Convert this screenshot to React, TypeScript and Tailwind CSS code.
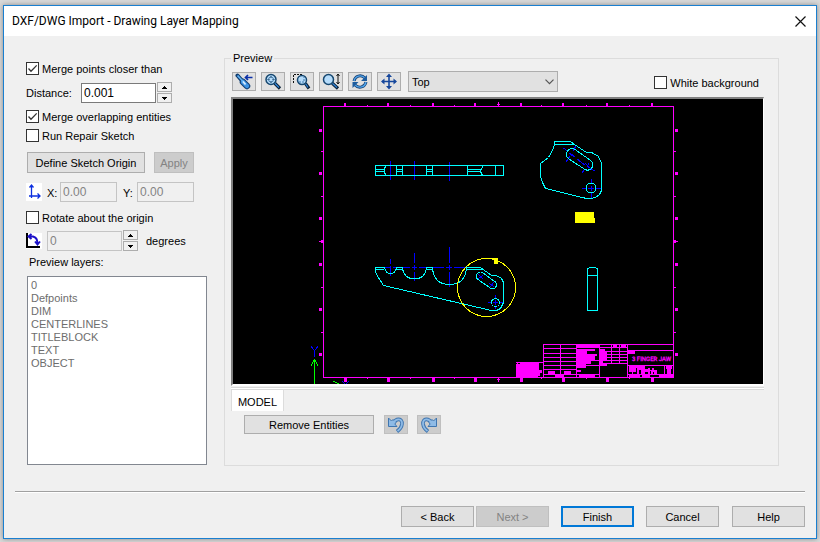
import React, { useState } from "react";

const BTN = "border border-[#adadad] bg-[#e1e1e1] text-center text-black";
const BTN_OFF = "border border-[#bfbfbf] bg-[#cccccc] text-center text-[#838383]";

function Check({ id, label, on = false }: { id: string; label: string; on?: boolean }) {
  const [checked, setChecked] = useState(on);
  return (
    <label htmlFor={id} className="flex h-[13px] items-center gap-[3px] whitespace-nowrap">
      <span className="grid shrink-0">
        <input
          id={id}
          type="checkbox"
          checked={checked}
          onChange={(e) => setChecked(e.target.checked)}
          className="col-start-1 row-start-1 size-[13px] appearance-none border border-[#333333] bg-white"
        />
        {checked && (
          <svg viewBox="0 0 13 13" className="pointer-events-none col-start-1 row-start-1 size-[13px]">
            <path d="M2.5 6.5 5 9.2 10.7 3.4" fill="none" stroke="#333" strokeWidth="1.3" />
          </svg>
        )}
      </span>
      <span className="pt-[2px]">{label}</span>
    </label>
  );
}

function Spinner({ name }: { name: string }) {
  return (
    <div className="flex flex-col gap-px">
      <button aria-label={`Increase ${name}`} className="grid h-[10px] w-[15px] place-items-center border border-[#adadad] bg-[#f0f0f0]">
        <svg viewBox="0 0 5 3" className="h-[3px] w-[5px]" shapeRendering="crispEdges">
          <path d="M2 0h1v1h1v1h1v1H0V2h1V1h1z" />
        </svg>
      </button>
      <button aria-label={`Decrease ${name}`} className="grid h-[10px] w-[15px] place-items-center border border-[#adadad] bg-[#f0f0f0]">
        <svg viewBox="0 0 5 3" className="h-[3px] w-[5px]" shapeRendering="crispEdges">
          <path d="M0 0h5v1H4v1H3v1H2V2H1V1H0z" />
        </svg>
      </button>
    </div>
  );
}

function Tool({ label, off = false, children }: { label: string; off?: boolean; children: React.ReactNode }) {
  return (
    <button
      aria-label={label}
      disabled={off}
      className={`grid h-[19px] w-6 shrink-0 place-items-center ${off ? BTN_OFF : BTN}`}
    >
      <svg viewBox="0 0 18 17" className="h-[17px] w-[18px]" fill="none">
        {children}
      </svg>
    </button>
  );
}

function Lens({ cx, cy, r }: { cx: number; cy: number; r: number }) {
  const o = r * 0.75;
  return (
    <>
      <path d={`M${cx + o} ${cy + o} 16 15.5`} stroke="#0c2238" strokeWidth="3.2" />
      <path d={`M${cx + o} ${cy + o} 15 14.5`} stroke="#2f83d8" strokeWidth="1.2" />
      <circle cx={cx} cy={cy} r={r} fill="#b5dcfb" stroke="#16476f" strokeWidth="1.5" />
    </>
  );
}

function Undo() {
  return (
    <>
      <path d="M6.5 7C9 2 15.500 2 15 8c-.3 3-2 5.200-5 7.500" stroke="#4076b0" strokeWidth="3.600" />
      <path d="M1.500 2v8.500H10L7.800 8 9 6.500 6 3.500 4.500 5z" fill="#8fbbe6" stroke="#4076b0" />
      <path d="M6.500 7C9 2 15.500 2 15 8c-.3 3-2 5.200-4.500 7" stroke="#8fbbe6" strokeWidth="1.800" />
    </>
  );
}

const BIG_X = [344, 387, 432, 474, 520, 562, 606, 651];
const SMALL_X = [367, 410, 454, 541, 586, 629];
const BIG_Y = [129, 172, 217, 263, 308, 353];
const SMALL_Y = [151, 196, 287, 332];

function Drawing() {
  return (
    <svg
      role="img"
      aria-label="Drawing preview"
      viewBox="233 99 530 285"
      preserveAspectRatio="xMidYMid meet"
      className="h-full w-full"
      fill="none"
      shapeRendering="crispEdges"
    >
      {/* sheet frame */}
      <rect x="323.500" y="106.500" width="350" height="271" stroke="#f0f" />
      <g fill="#f0f">
        {BIG_X.map((x) => (
          <React.Fragment key={x}>
            <rect x={x} y="103" width="2" height="3" />
            <rect x={x} y="378" width="3" height="4" />
          </React.Fragment>
        ))}
        {SMALL_X.map((x) => (
          <React.Fragment key={x}>
            <rect x={x} y="105" width="1" height="1" />
            <rect x={x} y="378" width="1" height="1" />
          </React.Fragment>
        ))}
        {BIG_Y.map((y) => (
          <React.Fragment key={y}>
            <rect x="319" y={y} width="3" height="3" />
            <rect x="675" y={y} width="3" height="3" />
          </React.Fragment>
        ))}
        {SMALL_Y.map((y) => (
          <React.Fragment key={y}>
            <rect x="321" y={y} width="2" height="1" />
            <rect x="674" y={y} width="2" height="1" />
          </React.Fragment>
        ))}
        <path d="M498 102h1v4h-1zM497 104h3v1h-3zM498 378h1v4h-1zM497 379h3v1h-3zM319 241h4v1h-4zM321 240h2v3h-2zM674 241h4v1h-4zM674 240h2v3h-2z" />
      </g>

      {/* centre lines */}
      <g stroke="#00f">
        <path d="M390.500 161v19M414.500 161v19M449.500 162v19" />
        <path d="M563 148l5 3M570 153l5 4M577 159l8 6M588 167l7 4M576 146l-3 5M570 156l-4 6M589 163l-2 4M585 169l-3 4M569 153l5 4M585 163l5 5" />
        <path d="M591.500 179v5M591.500 186v5M591.500 193v5M582 188.500h4M588 188.500h6M596 188.500h5" />
        <path d="M385 267.500h6M393 267.500h3M402 267.500h8M412 267.500h5M419 267.500h7M433 267.500h11M446 267.500h6M454 267.500h13" />
        <path d="M390.500 259v5M390.500 266v10M414.500 253v10M414.500 265v5M414.500 272v9M449.500 247v16M449.500 265v5M449.500 272v15" />
        <path d="M478 274l5 5M483 275l-5 4M489 283l5 4M494 282l-4 5M488 302.500h3M493 302.500h5M500 302.500h4M495.500 295v3M495.500 300v5M495.500 306v3" />
      </g>

      {/* parts */}
      <g stroke="#0ff">
        <rect x="375.500" y="165.500" width="128" height="10" />
        <path d="M396.500 165v11M402.500 165v11M426.500 165v11M432.500 165v11M467.500 165v11M495.500 165v11" />
        <path d="M376 169.500h8M376 171.500h8M396 169.500h6M396 171.500h6M426 169.500h6M426 171.500h6M467 169.500h14M467 171.500h14" />
        <path d="M385.500 165v2l-1 1v5l1 1v2M482.500 165v2l-1 2-1 1v2l1 1 1 3" />
        <path d="M554.500 141.500H570.500L574.500 144.500 586.500 152.500H591.500L598.500 156.500 601.500 163.500V190.500L599.500 194.500 595.500 197.500 590.500 198.500H586.500L545.500 188.500 542.500 182.500 540.500 176.500V163.500L548.500 157.500 552.500 150.500 554.500 144.500ZM554.500 144.500H574.500" />
        <path d="M575 149.500 590 160A5.200 5.200 0 0 1 585 169.500L569 159A5.200 5.200 0 0 1 575 149.500Z" />
        <circle cx="591" cy="188" r="5" />
        <path d="M375.500 267.500h9q1 6 6 6t6-6h6q1 11 12 11.500 11-.500 12-11.500h6q1 17 17 17 16 0 17-17h14l11 8h5l5 3 2 4v20l-3 6-4 2h-5L383.500 285.500 376.500 274.500 375.500 271.500z" />
        <path d="M375 269.500h9M396 269.500h7M426 269.500h7M467 269.500h15" />
        <path d="M483 273 494 281A4 4 0 0 1 491 288.500L478 279.500A4 4 0 0 1 483 273Z" />
        <circle cx="495.500" cy="302.500" r="4" />
        <path d="M587.500 310.500V269l2-1.500h6l2 1.500V310.500zM587 275.500h11" />
      </g>
      <g fill="#ff0">
        <path d="M575 212h19v6h1v5h-20zM492 258h6v1h-6zM494 259h4v5h-4z" />
        <circle cx="486.500" cy="287.500" r="29" fill="none" stroke="#ff0" />
      </g>

      {/* title block */}
      <g stroke="#f0f">
        <path d="M516 362.500h28M543.500 377V344.500H673M560.500 345v32M576.500 345v32M599.500 345v32M611.500 345v18M619.500 345v18M627.500 345v32" />
        <path d="M543 348.500h33M543 353.500h33M543 357.500h33M543 361.500h33M543 365.500h56M543 369.500h33M543 374.500h56" />
        <path d="M576 360.500h51M599 347.500h28M599 351.500h28M599 354.500h28M599 357.500h28M599 363.500h28M627 350.500h46M627 365.500h46M627 374.500h46M664.500 365v9" />
      </g>
      <g fill="#f0f">
        <path d="M516 362h23v8h3v3h-2v3h-2v1h-22z" />
        <path d="M548 371h7v3h-7zM564 371h7v3h-7zM555 374h9v3h-9zM577 345h22v3h-22zM577 349h18v2h-18zM577 351h10v3h10v2h-2v4h-4v4h-5v4h-9zM577 370h4v2h-4zM579 375h16v2h-16z" />
        <path d="M600 349h5v2h2v10h-4v4h-3zM613 345h4v2h-4zM621 345h5v2h-5zM628 351h7v3h-7zM600 363h7v3h-7z" />
        <path d="M629 366h16v3h3v-1h2v2h2v-2h2v2h3v4h-3v-2h-1v2h-2v-3h-1v3h-2v-2h-3v2h-4v-4h-2v4h-2v-6h-1v4h-3v4h-1v-4h-3zM666 366h6v3h-1v5h-4v-5h-1zM629 375h11v2h-11zM642 375h8v2h-8zM659 375h14v2h-14z" />
        <text x="632" y="361" fontSize="6" fontFamily="Roboto, sans-serif" stroke="#f0f" strokeWidth=".3" textRendering="geometricPrecision">3 FINGER JAW</text>
      </g>
      <path d="M516 363h1M518 363.500h2" stroke="#000" />

      {/* axis triad */}
      <path d="M314.500 359v26M311 365.500l3.500-6 3.500 6M333 381l6 3" stroke="#0f0" />
      <path d="M311 346l3.500 5 3.500-5M314.500 351v6M342 381l3 3h1l3-3" stroke="#00f" />
    </svg>
  );
}

const LAYERS = ["0", "Defpoints", "DIM", "CENTERLINES", "TITLEBLOCK", "TEXT", "OBJECT"];

export default function App() {
  return (
    <div className="flex h-screen min-h-[542px] bg-[#d9d9d9] px-[3px] pt-[5px] pb-[3px] font-['Liberation_Sans',Arial,sans-serif] text-[11px] leading-[13px] text-black">
      <main className="flex min-w-0 flex-1 flex-col border border-[#1a7fd0] bg-[#f0f0f0] shadow-[0_0_5px_#888888]">
        <header className="flex h-[30px] items-center justify-between bg-white pr-[10px] pl-2">
          <h1 className="font-[Roboto,sans-serif] text-[12px] leading-4">DXF/DWG Import - Drawing Layer Mapping</h1>
          <button aria-label="Close" className="size-[11px]">
            <svg viewBox="0 0 11 11" className="size-[11px]">
              <path d="M.5.5l10 10M10.500.5l-10 10" stroke="#111" strokeWidth="1.200" />
            </svg>
          </button>
        </header>

        <div className="flex flex-1 gap-[17px] pt-4 pr-[37px] pl-[22px]">
          <section className="flex w-[181px] shrink-0 flex-col pt-[10px]">
            <Check id="merge-points" label="Merge points closer than" on />
            <div className="mt-[7px] flex items-center">
              <label htmlFor="distance" className="w-[55px] pt-[2px]">Distance:</label>
              <input id="distance" defaultValue="0.001" className="mr-px h-5 w-[75px] border border-[#7a7a7a] bg-white px-[2px] text-[12px]" />
              <Spinner name="distance" />
            </div>
            <div className="mt-[7px] flex flex-col gap-[6px]">
              <Check id="merge-overlap" label="Merge overlapping entities" on />
              <Check id="repair" label="Run Repair Sketch" />
            </div>
            <div className="mt-[10px] ml-px flex gap-[9px]">
              <button className={`h-[21px] w-[118px] pt-[2px] ${BTN}`}>Define Sketch Origin</button>
              <button disabled className={`h-[21px] w-10 pt-[2px] ${BTN_OFF}`}>Apply</button>
            </div>
            <div className="mt-[9px] flex h-5 items-center">
              <svg viewBox="0 0 16 18" className="mr-[5px] h-[18px] w-4 bg-white" fill="none">
                <path d="M5.500 3v10H14M3.500 4.500l2-2.500 2 2.500M11.500 10.500l2.500 2.500-2.500 2.500M3 13h5M5.500 11v4" stroke="#0b2fe0" strokeWidth="1.300" />
              </svg>
              <label htmlFor="origin-x" className="w-[13px] pt-[2px]">X:</label>
              <input id="origin-x" disabled defaultValue="0.00" className="mr-[6px] h-5 w-[57px] border border-[#c4c4c4] bg-[#f0f0f0] px-[2px] text-[12px] text-[#838383]" />
              <label htmlFor="origin-y" className="w-[14px] pt-[2px]">Y:</label>
              <input id="origin-y" disabled defaultValue="0.00" className="h-5 w-[57px] border border-[#c4c4c4] bg-[#f0f0f0] px-[2px] text-[12px] text-[#838383]" />
            </div>
            <div className="mt-[9px]">
              <Check id="rotate" label="Rotate about the origin" />
            </div>
            <div className="mt-[6px] flex items-center">
              <svg viewBox="0 0 16 16" className="mr-[5px] size-4 bg-white" fill="none">
                <path d="M1 0v14h13" stroke="#000" strokeWidth="2" />
                <path d="M3 3.500h4q4.500 1 4.500 7M5.500 1 2.500 3.500 5.500 6M9 8.500l2.500 3 2.500-3" stroke="#1c10c8" strokeWidth="1.900" />
              </svg>
              <input id="angle" disabled defaultValue="0" className="mr-px h-5 w-[75px] border border-[#c4c4c4] bg-[#f0f0f0] px-[2px] text-[12px] text-[#838383]" />
              <Spinner name="angle" />
              <label htmlFor="angle" className="ml-2 pt-[2px]">degrees</label>
            </div>
            <h2 id="layers" className="mt-[5px] ml-[3px]">Preview layers:</h2>
            <ul aria-labelledby="layers" className="mt-[7px] ml-px h-[189px] border border-[#828790] bg-white px-[3px] pt-[2px] text-[#6d6d6d]">
              {LAYERS.map((l) => (
                <li key={l}>{l}</li>
              ))}
            </ul>
          </section>

          <fieldset className="flex h-[414px] min-w-0 flex-1 flex-col border border-[#dcdcdc] pr-[14px] pl-[6px]">
            <legend className="px-[2px]">Preview</legend>
            <div className="mt-[6px] flex h-[21px] items-center pl-px">
              <div className="flex gap-[5px]">
                <Tool label="Normal to">
                  <path d="M2.500 2.500 9 10" stroke="#0f3d70" strokeWidth="4" strokeLinecap="round" />
                  <path d="M8 9l4 4" stroke="#0f3d70" strokeWidth="6.500" strokeLinecap="round" />
                  <path d="M8 9l4 4" stroke="#3c93e4" strokeWidth="4.500" strokeLinecap="round" />
                  <path d="M2.500 2.500 9 9.500" stroke="#5fb0f2" strokeWidth="1.800" />
                  <path d="M8 8.500l2.500 3" stroke="#d6edff" strokeWidth="1.800" />
                  <path d="M10.500 4.500h7M13 2l-2.500 2.500L13 7" stroke="#0a2fa8" strokeWidth="1.700" />
                </Tool>
                <Tool label="Zoom to fit">
                  <Lens cx={7} cy={6.5} r={5} />
                  <path d="M7 3v2M7 8v2M3.500 6.500h2M8.500 6.500h2" stroke="#123a5c" />
                  <circle cx="7" cy="6.500" r="2.500" stroke="#4a7da8" />
                </Tool>
                <Tool label="Zoom to area">
                  <path d="M.5 10V1.500H9" stroke="#111" strokeDasharray="2 1" />
                  <Lens cx={9} cy={7} r={4.5} />
                  <path d="M6 9h5V4" stroke="#3f78ac" strokeDasharray="2 1" />
                </Tool>
                <Tool label="Zoom in or out">
                  <Lens cx={6.5} cy={6.5} r={5} />
                  <path d="M16 1v10M14.500 3 16 1l1.500 2M14.500 9l1.500 2 1.500-2" stroke="#111" />
                </Tool>
                <Tool label="Rotate view">
                  <path d="M3 8C4 3 10 1 14 5M15 9c-1 5-7 7-11 3" stroke="#173e70" strokeWidth="3" />
                  <path d="M3 8C4 3 10 1 14 5M15 9c-1 5-7 7-11 3" stroke="#4fa4ea" strokeWidth="1.400" />
                  <path d="M16 2v6h-6zM1.500 15V9h6z" fill="#1d5c9e" />
                </Tool>
                <Tool label="Pan">
                  <path d="M9 2v13M2 8.500h14" stroke="#16479c" strokeWidth="1.600" />
                  <path d="M6 4 9 .500 12 4zM6 13l3 3.500 3-3.500zM4.500 5.500 1 8.500l3.500 3zM13.500 5.500l3.500 3-3.500 3z" fill="#16479c" />
                </Tool>
              </div>
              <div className="ml-[7px] grid w-[150px] items-center">
                <select aria-label="View" className="col-start-1 row-start-1 h-[21px] w-full appearance-none border border-[#adadad] bg-[#e1e1e1] px-[3px] pt-[2px] text-[11px]">
                  <option>Top</option>
                </select>
                <svg viewBox="0 0 9 6" className="pointer-events-none col-start-1 row-start-1 mr-1 h-[6px] w-[9px] justify-self-end">
                  <path d="M.5.7l4 4 4-4" fill="none" stroke="#555" strokeWidth="1.200" />
                </svg>
              </div>
              <div className="ml-auto pt-[2px] pr-[5px]">
                <Check id="white-bg" label="White background" />
              </div>
            </div>

            <div className="mt-[5px] h-[289px] border-t-2 border-r border-b-2 border-l-2 border-t-[#808080] border-r-white border-b-white border-l-[#808080] bg-black">
              <Drawing />
            </div>
            <div className="mt-px h-[3px] border-y border-[#d9d9d9] bg-white" />
            <div role="tablist" className="flex">
              <button role="tab" aria-selected="true" className="h-[21px] w-[53px] border-r border-l border-[#dcdcdc] bg-white pt-[3px] text-center">MODEL</button>
            </div>
            <div className="mt-1 ml-[13px] flex">
              <button className={`mr-[10px] h-[19px] w-[130px] pt-[2px] ${BTN}`}>Remove Entities</button>
              <div className="flex gap-[9px]">
                <Tool label="Undo" off><Undo /></Tool>
                <Tool label="Redo" off>
                  <g transform="matrix(-1 0 0 1 18 0)"><Undo /></g>
                </Tool>
              </div>
            </div>
          </fieldset>
        </div>

        <footer className="mx-[11px] flex h-[47px] justify-end border-t border-[#a0a0a0] pt-[14px] shadow-[inset_0_1px_0_white]">
          <button className={`mr-[2px] h-[21px] w-[73px] pt-[2px] ${BTN}`}>&lt; Back</button>
          <button disabled className={`mr-3 h-[21px] w-[73px] pt-[2px] ${BTN_OFF}`}>Next &gt;</button>
          <button className="mr-3 h-[21px] w-[73px] border-2 border-[#0078d7] bg-[#e1e1e1] pt-[2px] text-center">Finish</button>
          <button className={`mr-[13px] h-[21px] w-[73px] pt-[2px] ${BTN}`}>Cancel</button>
          <button className={`h-[21px] w-[73px] pt-[2px] ${BTN}`}>Help</button>
        </footer>
      </main>
    </div>
  );
}
